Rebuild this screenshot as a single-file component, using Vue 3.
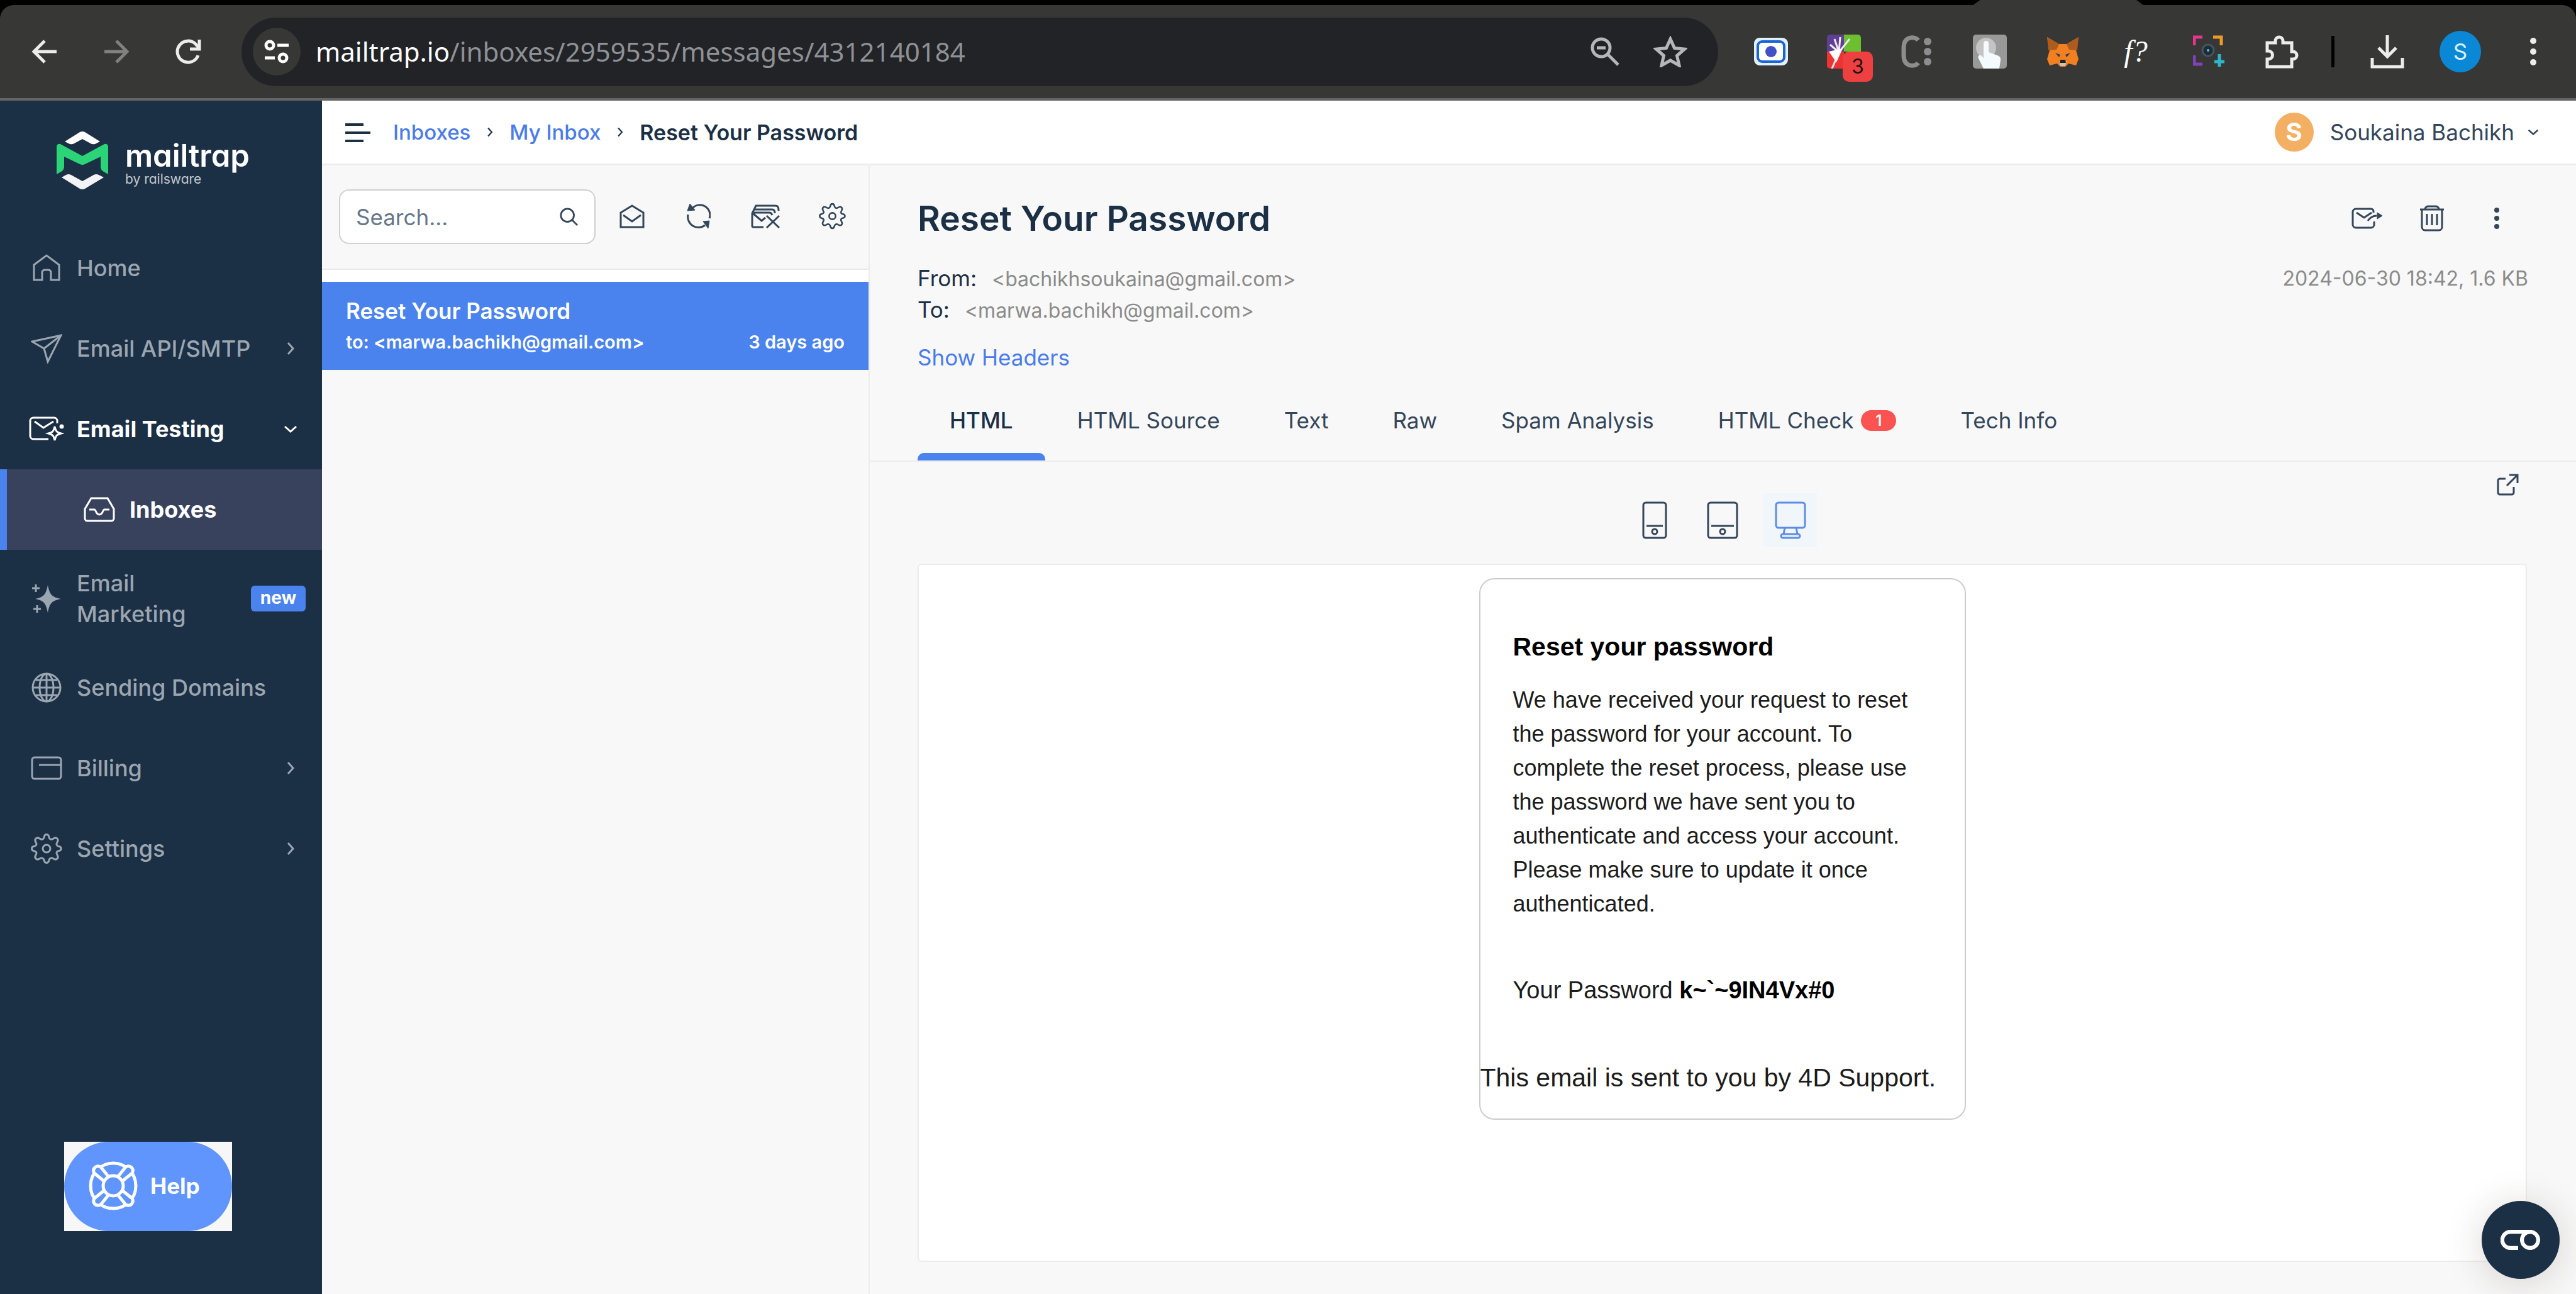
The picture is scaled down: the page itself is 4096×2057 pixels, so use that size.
<script setup>
import { h, ref } from 'vue'

// Line icons: [width, height, markup]
const icons = {
  back: [42, 40, '<path d="M40 20H4M21 3L4 20l17 17" stroke-width="5"/>'],
  forward: [42, 40, '<path d="M2 20h36M21 3l17 17-17 17" stroke-width="5"/>'],
  reload: [42, 42, '<path d="M37 27A17 17 0 1 1 33 9l5 6" stroke-width="5"/><path d="M39 2v15H24" stroke-width="5"/>'],
  tune: [40, 40, '<circle cx="9" cy="10" r="6"/><path d="M21 10h18M1 30h16"/><circle cx="30" cy="30" r="6"/>'],
  zoomOut: [46, 46, '<circle cx="17" cy="17" r="14"/><path d="M27 27l17 17M10 17h14"/>'],
  star: [54, 50, '<path d="M27 5l6.500 14.500 16 1.500-12 10.500 3.500 15.500L27 39l-14 8 3.500-15.500L4.500 21l16-1.500z"/>'],
  puzzle: [54, 54, '<path d="M4 13h13v-3a6 6 0 0 1 12 0v3h14v14h2a6 6 0 0 1 0 12h-2v12H4V39h2a6.500 6.500 0 0 0 0-13H4z" stroke-width="5"/>'],
  download: [54, 54, '<path d="M27 1v33M13 21l14 14 14-14M3 37v14h48V37" stroke-width="5"/>'],
  menu: [40, 32, '<path d="M0 4h29M0 17h40M0 30h29" stroke-width="4"/>'],
  home: [46, 46, '<path d="M3 18L23 3l20 15v24H30V29a5 5 0 0 0-5-3h-4a5 5 0 0 0-5 3v13H3z"/>'],
  plane: [50, 48, '<path d="M2 13L48 3 27 45 21 24zM21 24L48 3"/>'],
  testing: [56, 40, '<path d="M31 36H7a5 5 0 0 1-5-5V7a5 5 0 0 1 5-5h33a5 5 0 0 1 5 5v4M9 8l14 10L39 8"/><path d="M41 16c2 8 3 9 10 11-7 2-8 3-10 11-2-8-3-9-10-11 7-2 8-3 10-11z"/><circle cx="52" cy="16" r="2" fill="currentColor"/>'],
  inbox: [50, 42, '<path d="M12 3h26l10 17v15a4 4 0 0 1-4 4H6a4 4 0 0 1-4-4V20zM9 21h8c3 0 2 8 8 8s5-8 8-8h8"/>'],
  sparkle: [48, 48, '<path d="M26 2c3 15 6 19 21 22-15 3-18 7-21 22C23 31 20 27 6 24 20 21 23 17 26 2z" fill="currentColor" stroke="none"/><path d="M7 1v12M1 7h12M9 34v12M3 40h12"/>'],
  globe: [48, 48, '<circle cx="24" cy="24" r="22"/><ellipse cx="24" cy="24" rx="11" ry="22"/><path d="M24 2v44M2 24h44M7 12h34M7 36h34"/>'],
  card: [50, 38, '<rect x="2" y="2" width="46" height="34" rx="4"/><path d="M13 14h35"/>'],
  gear: [50, 50, '<path d="M21 7C22 1 28 1 29 7c1 4 4 4 7 2 5-3 9 1 6 6-2 3-1 5 1 6 7 1 7 7 0 8-2 1-3 3-1 6 3 5-1 9-6 6-3-2-6-1-7 2-1 6-7 6-8 0-1-3-4-4-7-2-5 3-9-1-6-6 2-3 1-5-2-6-6-1-6-7 0-8 3-1 4-3 2-6-3-5 1-9 6-6 3 2 6 2 7-2z"/><circle cx="25" cy="25" r="6"/>'],
  chevronRight: [12, 22, '<path d="M2 2l8 9-8 9"/>'],
  chevronDown: [22, 12, '<path d="M2 2l9 8 9-8"/>'],
  search: [32, 32, '<circle cx="13" cy="13" r="11"/><path d="M21 21l9 9"/>'],
  open: [40, 38, '<path d="M2 13L20 2l18 11v23H2zM6 17l14 10 14-10"/>'],
  refresh: [38, 40, '<path d="M9 7a16 16 0 0 1 27 16M29 34A17 17 0 0 1 2 17"/><path d="M5 0L1 11l12-1zM26 28l10-1-2 12z" fill="currentColor" stroke-width="1"/>'],
  clear: [46, 38, '<path d="M20 36H4a2 2 0 0 1-2-2V14L8 2h30c5 0 6 2 6 8M6 8h28c3 0 4 2 4 6M3 13h26c4 0 4 2 5 4M3 14l14 12 6-5M25 18l20 19M45 18L25 37"/>'],
  forwardMail: [50, 34, '<path d="M36 22v5a5 5 0 0 1-5 5H7a5 5 0 0 1-5-5V7a5 5 0 0 1 5-5h24a4 4 0 0 1 4 4v2M8 8l12 8 12-8M26 21c4-6 9-8 14-8"/><path d="M41 8l8 5-8 5z" fill="currentColor" stroke-width="1"/>'],
  trash: [40, 42, '<path d="M1 7h38M4 7v28a5 5 0 0 0 5 5h22a5 5 0 0 0 5-5V7M9 6c1-3 2-4 5-4h12c3 0 4 1 5 4M12 14v18M20 14v18M28 14v18"/>'],
  external: [36, 36, '<path d="M14 9H5a3 3 0 0 0-3 3v19a3 3 0 0 0 3 3h19a3 3 0 0 0 3-3v-9M20 3h13v13M33 3L16 20"/>'],
  phone: [40, 60, '<rect x="2" y="2" width="36" height="56" rx="4"/><path d="M7 39h26"/><circle cx="20" cy="48" r="4"/>'],
  tablet: [50, 60, '<rect x="2" y="2" width="46" height="56" rx="4"/><path d="M7 39h36"/><circle cx="25" cy="48" r="4"/>'],
  desktop: [50, 60, '<rect x="2" y="2" width="46" height="40" rx="4"/><path d="M16 42l-2 10M34 42l2 10"/><rect x="10" y="52" width="30" height="6" rx="3"/>'],
  buoy: [78, 78, '<circle cx="39" cy="39" r="36"/><path d="M25 32L9 19C5 12 12 5 19 9L32 25M53 32L69 19C73 12 66 5 59 9L46 25M53 46L69 59C73 66 66 73 59 69L46 53M25 46L9 59C5 66 12 73 19 69L32 53" fill="#5f95fd"/><circle cx="39" cy="39" r="16" fill="#5f95fd"/>'],
  dots: [12, 46, '<g fill="currentColor" stroke="none"><circle cx="6" cy="6" r="5"/><circle cx="6" cy="23" r="5"/><circle cx="6" cy="40" r="5"/></g>'],
  smallDots: [10, 34, '<g fill="currentColor" stroke="none"><circle cx="5" cy="4" r="4"/><circle cx="5" cy="17" r="4"/><circle cx="5" cy="30" r="4"/></g>'],
  link: [94, 48, '<path d="M41 43H23a19 19 0 0 1 0-38h46"/><circle cx="69" cy="24" r="19"/>']
}

const extensions = {
  recorder: [54, 44, '<rect width="54" height="44" rx="9" fill="#e4f0ff" stroke="none"/><rect x="6" y="6" width="42" height="32" rx="7" fill="#fff" stroke="#1a66d2" stroke-width="4"/><circle cx="27" cy="22" r="9" fill="#4051c8" stroke="none"/>'],
  palette: [54, 54, '<g stroke="none"><path d="M5 0h22v27H0V5a5 5 0 0 1 5-5z" fill="#5e3f94"/><path d="M27 0h22a5 5 0 0 1 5 5v22H27z" fill="#6cc02f"/><path d="M0 27h27v27H5a5 5 0 0 1-5-5z" fill="#ee3333"/></g><path d="M8 54l11-26L5 16M19 28L12 7M19 28l2-24M19 28L36 7" stroke="#f4e7f0" stroke-width="3"/><path d="M3 27l22-5-10 22z" fill="#fff" stroke="none"/>'],
  code: [50, 52, '<path d="M27 8C22 1 4 1 4 20v12c0 19 18 19 23 12" stroke="#8d8d8d" stroke-width="7"/><g fill="#8d8d8d" stroke="none"><circle cx="42" cy="10" r="6"/><circle cx="42" cy="26" r="6"/><circle cx="42" cy="42" r="6"/></g>'],
  pointer: [54, 54, '<rect width="54" height="54" rx="5" fill="#999" stroke="none"/><circle cx="21" cy="21" r="16" fill="#c4c4c4" stroke="none"/><path d="M17 14a4 4 0 0 1 8 0v14l14 5q6 2 5 8l-2 13H17L9 38c-2-4 2-7 5-4l3 3z" fill="#f5faff" stroke="none"/>'],
  fox: [52, 50, '<g stroke="none"><path d="M1 2l19 11h12L51 2l-4 21 4 14-4 10-12-3-5 5h-8l-5-5-12 3-4-10 4-14z" fill="#f08021"/><path d="M1 2l19 11-4 9-13 1zM51 2L32 13l4 9 13 1z" fill="#ad5c1d"/><path d="M14 27l8 3-2 4zM38 27l-8 3 2 4z" fill="#353b4d"/><path d="M20 40h12l-2 8h-8z" fill="#d5bfb2"/><path d="M22 38h8l1 5H21z" fill="#222"/></g>'],
  capture: [50, 52, '<g stroke-width="5"><path d="M2 16V3h13" stroke="#e7358b"/><path d="M32 3h13v13" stroke="#f09a25"/><path d="M2 32v14h13" stroke="#8340bd"/><path d="M42 30v20M34 42h16" stroke="#2fb6cb"/></g><circle cx="24" cy="24" r="9" fill="#1f2b38" stroke="#465563" stroke-width="3"/><circle cx="24" cy="24" r="2" fill="#5cc" stroke="none"/>']
}

const Icon = (props) => {
  const [w, ht, body] = icons[props.name] || extensions[props.name]
  return h('svg', {
    class: 'icon', width: w, height: ht, viewBox: `0 0 ${w} ${ht}`,
    fill: 'none', stroke: 'currentColor', 'stroke-width': props.stroke || 3,
    'aria-hidden': 'true', innerHTML: body
  })
}
Icon.props = ['name', 'stroke']

const extensionNames = ['recorder', 'palette', 'code', 'pointer', 'fox', 'formula', 'capture', 'puzzle']

const nav = [
  { label: 'Home', icon: 'home' },
  { label: 'Email API/SMTP', icon: 'plane', chevron: 'chevronRight' },
  { label: 'Email Testing', icon: 'testing', chevron: 'chevronDown', open: true },
  { label: 'Inboxes', icon: 'inbox', current: true },
  { label: 'Email Marketing', icon: 'sparkle', badge: 'new' },
  { label: 'Sending Domains', icon: 'globe' },
  { label: 'Billing', icon: 'card', chevron: 'chevronRight' },
  { label: 'Settings', icon: 'gear', chevron: 'chevronRight' }
]

const listActions = [
  ['open', 'Mark all as read'],
  ['refresh', 'Refresh'],
  ['clear', 'Clear inbox'],
  ['gear', 'Inbox settings']
]

const tabs = [
  { label: 'HTML' }, { label: 'HTML Source' }, { label: 'Text' }, { label: 'Raw' },
  { label: 'Spam Analysis' }, { label: 'HTML Check', count: 1 }, { label: 'Tech Info' }
]
const activeTab = ref('HTML')
const devices = ['phone', 'tablet', 'desktop']
const activeDevice = ref('desktop')
const query = ref('')
</script>

<template>
  <div class="screen">
    <header class="browser">
      <div class="tabstrip"><div class="tab-edge"></div></div>
      <div class="toolbar">
        <button class="tool go" aria-label="Back"><Icon name="back" /></button>
        <button class="tool go dim" aria-label="Forward"><Icon name="forward" /></button>
        <button class="tool go" aria-label="Reload"><Icon name="reload" /></button>
        <div class="address">
          <button class="site-info" aria-label="Site information"><Icon name="tune" stroke="5" /></button>
          <div class="url"><span class="host">mailtrap.io</span>/inboxes/2959535/messages/4312140184</div>
          <button class="in-bar" aria-label="Zoom"><Icon name="zoomOut" stroke="5" /></button>
          <button class="in-bar" aria-label="Bookmark"><Icon name="star" stroke="5" /></button>
        </div>
        <button v-for="name in extensionNames" :key="name" class="tool" :aria-label="name">
          <span v-if="name === 'formula'" class="formula">f?</span>
          <Icon v-else :name="name" />
          <span v-if="name === 'palette'" class="ext-badge">3</span>
        </button>
        <span class="divider"></span>
        <button class="tool" aria-label="Downloads"><Icon name="download" /></button>
        <button class="tool" aria-label="Profile"><span class="profile">S</span></button>
        <button class="tool" aria-label="Browser menu"><Icon name="dots" /></button>
      </div>
    </header>

    <div class="app">
      <aside class="sidebar">
        <a class="logo" href="#">
          <svg width="84" height="94" viewBox="0 0 84 94" aria-hidden="true">
            <path d="M14 17L38 2q4-2 8 0l24 15-8 4q-4 1-7-1L42 13 29 20q-3 2-7 1z" fill="#fff" />
            <path d="M1 69V26q0-6 6-5l35 19 35-19q6-1 6 5v43l-7-4q-5-3-5-8V41L46 53q-4 2-8 0L13 41v16q0 5-5 8z" fill="#2bd477" />
            <path d="M9 74l7-4q4-2 8 0l18 10 18-10q4-2 8 0l8 4-30 18q-4 2-8 0z" fill="#f1f3f5" />
          </svg>
          <span class="brand"><span class="brand-name">mailtrap</span><span class="brand-by">by railsware</span></span>
        </a>
        <nav>
          <a v-for="item in nav" :key="item.label" href="#" class="nav-item"
             :class="{ open: item.open, current: item.current, tall: item.badge }">
            <span class="nav-icon"><Icon :name="item.icon" /></span>
            <span class="nav-label">{{ item.label }}</span>
            <span v-if="item.badge" class="new">{{ item.badge }}</span>
            <span v-if="item.chevron" class="nav-chevron"><Icon :name="item.chevron" /></span>
          </a>
        </nav>
        <div class="help-box">
          <button class="help"><Icon name="buoy" stroke="5" />Help</button>
        </div>
      </aside>

      <div class="content">
        <div class="topbar">
          <button class="plain burger" aria-label="Toggle menu"><Icon name="menu" /></button>
          <nav class="crumbs" aria-label="Breadcrumb">
            <a href="#">Inboxes</a><Icon name="chevronRight" class="sep" />
            <a href="#">My Inbox</a><Icon name="chevronRight" class="sep" />
            <span class="here">Reset Your Password</span>
          </nav>
          <button class="plain user"><span class="avatar">S</span>Soukaina Bachikh<Icon name="chevronDown" class="user-chevron" /></button>
        </div>

        <div class="panes">
          <section class="list">
            <div class="list-tools">
              <label class="search">
                <input v-model="query" type="text" placeholder="Search..." aria-label="Search" />
                <Icon name="search" />
              </label>
              <button v-for="[name, label] in listActions" :key="name" class="plain list-action" :aria-label="label"><Icon :name="name" /></button>
            </div>
            <a class="message" href="#">
              <span class="message-title">Reset Your Password</span>
              <span class="message-sub"><span>to: &lt;marwa.bachikh@gmail.com&gt;</span><span>3 days ago</span></span>
            </a>
          </section>

          <main class="detail">
            <div class="title-row">
              <h1>Reset Your Password</h1>
              <div class="title-actions">
                <button class="plain" aria-label="Forward"><Icon name="forwardMail" /></button>
                <button class="plain" aria-label="Delete"><Icon name="trash" /></button>
                <button class="plain" aria-label="More"><Icon name="smallDots" /></button>
              </div>
            </div>
            <div class="meta">
              <div>
                <p><span class="key">From:</span>&lt;bachikhsoukaina@gmail.com&gt;</p>
                <p><span class="key">To:</span>&lt;marwa.bachikh@gmail.com&gt;</p>
              </div>
              <p>2024-06-30 18:42, 1.6 KB</p>
            </div>
            <a class="show-headers" href="#">Show Headers</a>
            <div class="tabs" role="tablist">
              <button v-for="tab in tabs" :key="tab.label" role="tab" class="plain tab"
                      :class="{ active: tab.label === activeTab }" @click="activeTab = tab.label">
                {{ tab.label }}<span v-if="tab.count" class="count">{{ tab.count }}</span>
              </button>
            </div>
            <div class="devices">
              <div class="device-group">
                <button v-for="d in devices" :key="d" class="plain device" :class="{ active: d === activeDevice }"
                        :aria-label="d" @click="activeDevice = d"><Icon :name="d" /></button>
              </div>
              <a class="external" href="#" aria-label="Open in a new window"><Icon name="external" /></a>
            </div>
            <div class="preview">
              <article class="mail">
                <h2>Reset your password</h2>
                <p class="mail-text">We have received your request to reset the password for your account. To complete the reset process, please use the password we have sent you to authenticate and access your account. Please make sure to update it once authenticated.</p>
                <p class="mail-pass">Your Password <b>k~`~9IN4Vx#0</b></p>
                <p class="mail-foot">This email is sent to you by 4D Support.</p>
              </article>
            </div>
          </main>
        </div>
      </div>
    </div>
    <button class="fab" aria-label="Open widget"><Icon name="link" stroke="9" /></button>
  </div>
</template>

<style>
body { margin: 0; }
</style>

<style scoped>
.screen { display: flex; flex-direction: column; min-height: 100vh; background: #f8f8f8; color: #1b2f45; font-family: Inter, "Liberation Sans", sans-serif; font-size: 35px; box-sizing: border-box; }
.screen * { box-sizing: border-box; }
.icon { flex: none; display: block; }
button { font: inherit; color: inherit; background: none; border: 0; padding: 0; display: flex; align-items: center; justify-content: center; }
a { text-decoration: none; color: #4b7bea; }
p, h1, h2 { margin: 0; }

.browser { background: #000; color: #ececec; }
.tabstrip { height: 8px; }
.tab-edge { height: 8px; margin-left: 76.6%; width: 6.6%; background: #373736; clip-path: polygon(4% 0, 96% 0, 100% 100%, 0 100%); }
.toolbar { display: flex; align-items: center; height: 152px; padding: 0 10px 0 14px; background: #373736; border-bottom: 4px solid #646466; border-radius: 22px 22px 0 0; }
.tool { position: relative; flex: none; width: 116px; height: 110px; }
.tool.go { width: 114px; }
.dim { color: #818181; }
.address { flex: 1; display: flex; align-items: center; height: 109px; margin: 0 26px 0 28px; padding: 0 24px 0 18px; border-radius: 55px; background: #222327; color: #8e9195; font-family: "Noto Sans", "Open Sans", sans-serif; }
.site-info { width: 76px; height: 76px; margin-right: 24px; border-radius: 50%; background: #373736; color: #fff; }
.url { flex: 1; font-size: 42px; line-height: 60px; white-space: nowrap; }
.host { color: #fff; }
.in-bar { width: 104px; height: 76px; color: #b5b6b8; }
.ext-badge { position: absolute; left: 56px; top: 55px; width: 48px; height: 48px; border-radius: 10px; background: #ee4040; color: #1d1010; font-size: 32px; line-height: 48px; text-align: center; }
.formula { font-family: "Liberation Serif", serif; font-style: italic; font-size: 48px; line-height: 48px; color: #fff; }
.divider { flex: none; width: 5px; height: 50px; margin: 0 26px 0 21px; background: #000; }
.profile { width: 66px; height: 66px; border-radius: 50%; background: #0a88d5; color: #d7f0ff; font-size: 35px; line-height: 66px; text-align: center; }

.app { flex: 1; display: flex; }
.sidebar { flex: none; width: 512px; display: flex; flex-direction: column; background: #1b2f45; }
.logo { display: flex; height: 202px; padding: 48px 0 0 89px; color: #fff; }
.brand { display: flex; flex-direction: column; margin: 16px 0 0 26px; font-feature-settings: "cv11"; }
.brand-name { font-size: 49px; line-height: 48px; font-weight: 600; }
.brand-by { font-size: 21px; line-height: 26px; color: #c3cad1; }
.nav-item { display: flex; align-items: center; height: 128px; padding: 0 38px 0 46px; color: #9ba6b1; font-size: 36px; line-height: 49px; font-weight: 500; }
.nav-item.tall { height: 155px; padding-right: 26px; }
.nav-item.tall .nav-label { flex: 0 1 200px; margin-right: auto; }
.nav-icon { flex: none; width: 56px; margin-right: 20px; display: flex; justify-content: center; }
.nav-label { flex: 1; }
.nav-chevron { width: 24px; display: flex; justify-content: center; }
.nav-item.open { color: #fff; font-weight: 700; }
.nav-item.current { padding-left: 119px; border-left: 11px solid #4b83ee; background: #38425d; color: #fff; font-weight: 700; }
.new { width: 87px; height: 41px; border-radius: 6px; background: #4b83ee; color: #fff; font-size: 28px; line-height: 38px; font-weight: 700; text-align: center; }
.help-box { width: 267px; margin: auto 0 100px 102px; background: #f7f7f7; }
.help { width: 100%; height: 142px; justify-content: flex-start; gap: 20px; padding: 0 0 2px 39px; border-radius: 71px; background: #5f95fd; color: #fff; font-size: 35px; font-weight: 700; }

.content { flex: 1; display: flex; flex-direction: column; }
.topbar { display: flex; align-items: center; height: 103px; padding: 0 59px 0 37px; background: #fff; border-bottom: 3px solid #eeeeee; line-height: 49px; }
.burger { margin-right: 36px; }
.crumbs { flex: 1; display: flex; align-items: center; font-size: 33px; font-weight: 500; }
.sep { margin: 0 26px; width: 10px; height: 16px; }
.here { font-size: 34px; font-weight: 600; }
.avatar { width: 62px; height: 62px; margin-right: 26px; border-radius: 50%; background: #f3b063; color: #fff; font-size: 40px; line-height: 62px; font-weight: 700; text-align: center; }
.user { font-weight: 400; color: #34465a; }
.user-chevron { margin-left: 21px; width: 18px; }

.panes { flex: 1; display: flex; }
.list { flex: none; width: 871px; border-right: 2px solid #ececec; }
.list-tools { display: flex; height: 166px; padding: 38px 0 0 27px; border-bottom: 2px solid #e9e9e9; color: #34465a; }
.search { display: flex; align-items: center; width: 408px; height: 87px; margin-right: 5px; padding: 0 25px; border: 2px solid #d0d0d0; border-radius: 16px; background: #fff; }
.search input { flex: 1; min-width: 0; padding: 0; border: 0; outline: 0; background: none; font: inherit; color: #1b2f45; }
.search input::placeholder { color: #66778a; opacity: 1; }
.search .icon { width: 30px; height: 30px; }
.list-action { width: 106px; height: 85px; }
.list-action:last-child .icon { width: 43px; height: 43px; }
.message { display: block; border-top: 19px solid #fff; padding: 21px 38px 19px; background: #4b83ee; background-clip: padding-box; color: #fff; }
.message-title { display: block; line-height: 50px; font-weight: 600; }
.message-sub { display: flex; justify-content: space-between; font-size: 29px; line-height: 50px; font-weight: 600; }

.detail { flex: 1; display: flex; flex-direction: column; padding-top: 54px; padding-bottom: 51px; }
.title-row { display: flex; justify-content: space-between; height: 60px; margin: 0 75px 0 76px; }
h1 { font-size: 55px; line-height: 60px; font-weight: 600; }
.title-actions { display: flex; color: #34465a; }
.title-actions .plain { width: 103px; }
.meta { display: flex; justify-content: space-between; margin: 41px 76px 0 76px; color: #8b8b8b; font-size: 32px; line-height: 49px; }
.key { margin-right: 24px; color: #1b2f45; font-size: 35px; }
.show-headers { margin: 26px 0 0 76px; line-height: 49px; }
.tabs { display: flex; height: 130px; margin-top: 11px; padding-left: 76px; border-bottom: 2px solid #ececec; }
.tab { padding: 12px 51px 0; border-bottom: 12px solid transparent; color: #34465a; line-height: 49px; position: relative; }
.tab.active { color: #1b2f45; font-weight: 500; }
.tab.active::after { content: ""; position: absolute; left: 0; right: 0; bottom: -12px; height: 12px; border-radius: 10px 10px 0 0; background: #4b83ee; }
.count { width: 56px; height: 33px; margin-left: 12px; border-radius: 17px; background: #fb5252; color: #fff; font-size: 24px; line-height: 33px; font-weight: 600; }
.devices { display: grid; grid-template-columns: 1fr auto 1fr; height: 162px; margin: 0 78px 0 76px; }
.device-group { grid-column: 2; display: flex; gap: 23px; padding-top: 50px; }
.device { width: 85px; height: 86px; color: #34465a; }
.device.active { background: #f0f6fa; color: #5d8de8; }
.external { justify-self: end; margin: 18px 12px 0 0; color: #34465a; }
.preview { flex: 1; margin: 0 78px 0 76px; padding: 21px 0; border: 2px solid #ececec; border-radius: 6px; background: #fff; }
.mail { width: 774px; margin: 0 auto; padding: 83px 0 38px; border: 2px solid #cccccc; border-radius: 24px; color: #1c1c1c; font-family: "Liberation Sans", Arial, sans-serif; line-height: 54px; }
.mail h2 { margin: 0 52px; font-size: 41px; line-height: 48px; color: #000; }
.mail-text { margin: 34px 52px 0; font-size: 36px; }
.mail-pass { margin: 83px 52px 0; font-size: 38px; }
.mail-pass b { color: #000; }
.mail-foot { margin-top: 85px; font-size: 41px; }

.fab { position: fixed; right: 26px; bottom: 24px; width: 124px; height: 124px; border-radius: 50%; background: #1b2f45; color: #fff; box-shadow: 0 6px 60px rgba(60, 40, 30, 0.18); }
.fab .icon { width: 64px; height: 34px; }
</style>
